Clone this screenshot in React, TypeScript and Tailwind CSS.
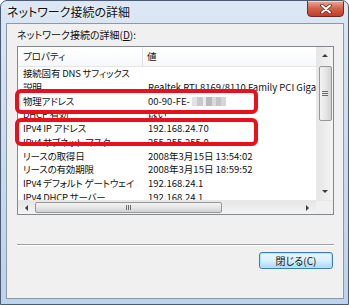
import React from "react";

const rows: { name: string; value: string; blur?: boolean }[] = [
    { name: "接続固有 DNS サフィックス", value: "" },
    { name: "説明", value: "Realtek RTL8169/8110 Family PCI Gigabit Ethernet NIC" },
    { name: "物理アドレス", value: "00-90-FE-", blur: true },
    { name: "DHCP 有効", value: "はい" },
    { name: "IPv4 IP アドレス", value: "192.168.24.70" },
    { name: "IPv4 サブネット マスク", value: "255.255.255.0" },
    { name: "リースの取得日", value: "2008年3月15日 13:54:02" },
    { name: "リースの有効期限", value: "2008年3月15日 18:59:52" },
    { name: "IPv4 デフォルト ゲートウェイ", value: "192.168.24.1" },
    { name: "IPv4 DHCP サーバー", value: "192.168.24.1" },
];

const Arrow = ({ dir }: { dir: "up" | "down" | "left" | "right" }) => {
    const pts = {
        up: "1,5 4,2 7,5",
        down: "1,2 4,5 7,2",
        left: "5,1 2,4 5,7",
        right: "2,1 5,4 2,7",
    }[dir];
    return (
        <svg width="8" height="8" viewBox="0 0 8 8">
            <polygon points={pts} fill="#3a3a3a" />
        </svg>
    );
};

const App = () => {
    return (
        <div className="w-[349px] h-[305px] relative flex flex-col rounded-t-[7px] border border-[#4b5b72] bg-gradient-to-b from-[#dbe7f4] via-[#c9dbee] to-[#bcd3ec] text-black font-['Noto_Sans_CJK_JP','Noto_Sans',sans-serif] [font-feature-settings:'palt'] overflow-hidden">
            {/* title bar */}
            <div className="h-[22px] flex justify-between shrink-0">
                <div className="pl-[6px] flex items-center text-[12px] leading-none text-[#111] [text-shadow:0_0_6px_#ffffff]">
                    ネットワーク接続の詳細
                </div>
                <div className="mr-[4px] -mt-px w-[37px] h-[17px] rounded-b-[4px] border border-[#6e2a20] bg-gradient-to-b from-[#e8aa9c] via-[#d4604a] to-[#c23d22] flex items-center justify-center shadow-[inset_0_1px_0_#f6d3ca]">
                    <svg width="12" height="10" viewBox="0 0 12 10">
                        <path d="M2 1.5 L10 8.5 M10 1.5 L2 8.5" stroke="#5a2a24" strokeWidth="3.6" strokeLinecap="round" />
                        <path d="M2 1.5 L10 8.5 M10 1.5 L2 8.5" stroke="#ffffff" strokeWidth="2" strokeLinecap="round" />
                    </svg>
                </div>
            </div>

            {/* client area */}
            <div className="flex-1 ml-[5px] mr-[4px] mb-[5px] border border-[#8d99a8] bg-[#f0f0f0] flex flex-col pl-[10px] pr-[9px] pt-[3px] text-[9.5px] text-[#111]">
                <div className="h-[16px] leading-[16px] text-[10px]">
                    ネットワーク接続の詳細(<span className="underline">D</span>):
                </div>

                <div className="mt-[3px] h-[169px] border border-[#828790] bg-white flex flex-col">
                    <div className="flex flex-1 min-h-0">
                        <div className="flex-1 min-w-0 overflow-hidden flex flex-col">
                            <div className="h-[20px] shrink-0 flex items-center border-b border-[#e5e5e5] bg-gradient-to-b from-white to-[#f7f8fa]">
                                <div className="w-[125px] h-full flex items-center pl-[5px] border-r border-[#e0e3e8]">プロパティ</div>
                                <div className="pl-[4px]">値</div>
                            </div>
                            {rows.map((r) => (
                                <div key={r.name} className="h-[13.75px] shrink-0 flex items-center leading-none whitespace-nowrap">
                                    <div className="w-[125px] shrink-0 pl-[5px] tracking-[-0.2px]">{r.name}</div>
                                    <div className="pl-[5px] flex items-center">
                                        {r.value}
                                        {r.blur && (
                                            <span className="flex ml-[2px] h-[9px]">
                                                <span className="w-[5px] bg-[#e2e2e2]" />
                                                <span className="w-[6px] bg-[#c9c9c9]" />
                                                <span className="w-[3px] bg-[#ededed]" />
                                                <span className="w-[6px] bg-[#b9b9b9]" />
                                                <span className="w-[4px] bg-[#dadada]" />
                                                <span className="w-[5px] bg-[#c4c4c4]" />
                                                <span className="w-[5px] bg-[#d6d6d6]" />
                                            </span>
                                        )}
                                    </div>
                                </div>
                            ))}
                        </div>
                        {/* vertical scrollbar */}
                        <div className="w-[17px] shrink-0 bg-gradient-to-r from-[#e6e6e6] to-[#f4f4f4] border-l border-[#e8e8e8] flex flex-col items-center">
                            <div className="h-[17px] w-full flex items-center justify-center"><Arrow dir="up" /></div>
                            <div className="mt-[2px] h-[55px] w-[13px] rounded-[2px] border border-[#979797] bg-gradient-to-r from-[#f3f3f3] via-[#e6e6e6] to-[#d2d2d2] flex items-center justify-center">
                                <div className="flex flex-col gap-[1px]">
                                    <span className="w-[6px] h-px bg-[#6b6b6b]" />
                                    <span className="w-[6px] h-px bg-[#6b6b6b]" />
                                    <span className="w-[6px] h-px bg-[#6b6b6b]" />
                                </div>
                            </div>
                            <div className="flex-1" />
                            <div className="h-[17px] w-full flex items-center justify-center"><Arrow dir="down" /></div>
                        </div>
                    </div>
                    {/* horizontal scrollbar */}
                    <div className="h-[14px] shrink-0 flex bg-gradient-to-b from-[#e6e6e6] to-[#f4f4f4] border-t border-[#e8e8e8]">
                        <div className="w-[17px] flex items-center justify-center"><Arrow dir="left" /></div>
                        <div className="w-[187px] mt-px h-[11px] rounded-[2px] border border-[#979797] bg-gradient-to-b from-[#f3f3f3] via-[#e6e6e6] to-[#d2d2d2] flex items-center justify-center">
                            <div className="flex gap-[1px]">
                                <span className="w-px h-[5px] bg-[#6b6b6b]" />
                                <span className="w-px h-[5px] bg-[#6b6b6b]" />
                                <span className="w-px h-[5px] bg-[#6b6b6b]" />
                            </div>
                        </div>
                        <div className="flex-1" />
                        <div className="w-[17px] flex items-center justify-center"><Arrow dir="right" /></div>
                        <div className="w-[17px] bg-[#f0f0f0]" />
                    </div>
                </div>

                <div className="mt-[29px] h-[2px] border-t border-[#a0a0a0] border-b border-b-white" />

                <div className="mt-[6px] flex justify-end pr-px">
                    <div className="w-[74px] h-[17px] rounded-[3px] border border-[#3c7fb1] bg-gradient-to-b from-[#eaf6fd] via-[#d9f0fc] to-[#a7d9f5] shadow-[inset_0_0_0_1px_#a8e6fd] flex items-center justify-center leading-none text-[10px]">
                        閉じる(C)
                    </div>
                </div>
            </div>

            {/* red highlight boxes */}
            <div className="absolute left-[14px] top-[88px] w-[243px] h-[25px] border-4 border-[#e8101a] rounded-[6px]" />
            <div className="absolute left-[14px] top-[117px] w-[243px] h-[28px] border-4 border-[#e8101a] rounded-[6px]" />
        </div>
    );
};

export default App;
